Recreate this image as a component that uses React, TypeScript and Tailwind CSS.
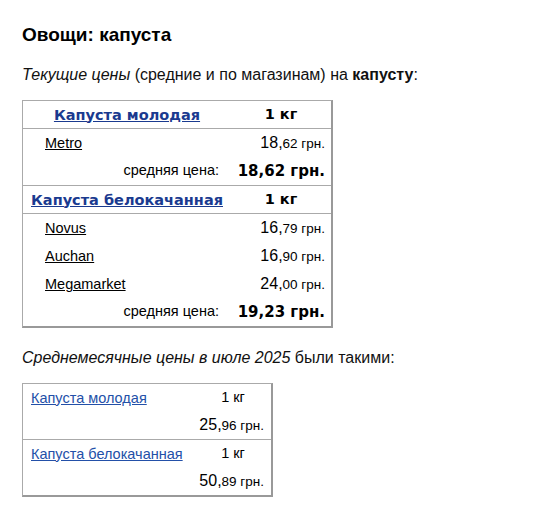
import React from "react";

const arial = { fontFamily: '"Liberation Sans", Arial, sans-serif' };

function Price({ a, b, bold }: { a: string; b: string; bold?: boolean }) {
  if (bold) {
    return (
      <span className="font-bold text-[15px] text-black" style={{ fontFamily: '"DejaVu Sans", Verdana, sans-serif' }}>
        {a},{b} грн.
      </span>
    );
  }
  return (
    <span className="text-black">
      <span className="text-[16px]">{a},</span>
      <span className="text-[13.5px]">{b} грн.</span>
    </span>
  );
}

function ShopRow({ name, a, b }: { name: string; a: string; b: string }) {
  return (
    <div className="grid grid-cols-[208px_1fr] h-[28px] items-center">
      <div className="pl-[22px]">
        <span className="underline text-[14.5px] text-black">{name}</span>
      </div>
      <div className="text-right pr-[6px]">
        <Price a={a} b={b} />
      </div>
    </div>
  );
}

function AvgRow({ a, b }: { a: string; b: string }) {
  return (
    <div className="grid grid-cols-[208px_1fr] h-[28px] items-center">
      <div className="text-right pr-[12px] text-[14.5px] text-black">средняя цена:</div>
      <div className="text-right pr-[6px]">
        <Price a={a} b={b} bold />
      </div>
    </div>
  );
}

function Header({ name, center }: { name: string; center?: boolean }) {
  return (
    <div className="grid grid-cols-[208px_1fr] h-[28px] items-center border-b border-[#aaa]" style={{ fontFamily: '"DejaVu Sans", Verdana, sans-serif' }}>
      <div className={center ? "text-center" : "pl-[8px]"}>
        <span className="underline font-bold text-[14.5px] text-[#1a3a8f]">{name}</span>
      </div>
      <div className="text-center font-bold text-[14.5px] text-black">1 кг</div>
    </div>
  );
}

function MonthBlock({ name, a, b, last }: { name: string; a: string; b: string; last?: boolean }) {
  return (
    <div className={last ? "" : "border-b border-[#aaa]"}>
      <div className="grid grid-cols-[172px_1fr] h-[27px] items-center">
        <div className="pl-[8px]">
          <span className="underline text-[14.5px] text-[#2350a8]">{name}</span>
        </div>
        <div className="text-center text-[14.5px] text-black">1 кг</div>
      </div>
      <div className="h-[28px] flex items-center justify-end pr-[7px]">
        <Price a={a} b={b} />
      </div>
    </div>
  );
}

export default function App() {
  return (
    <div className="bg-white w-[533px] h-[513px] pl-[22px] pt-[24px] text-black" style={arial}>
      <h1 className="text-[19px] font-bold leading-[22px]">Овощи: капуста</h1>
      <p className="mt-[20px] text-[16px] leading-[18px] text-[#111]">
        <i>Текущие цены</i> (средние и по магазинам) на <b>капусту</b>:
      </p>
      <div className="mt-[16px] w-[311px] border border-[#aaa] border-b-2 border-r-2 border-b-[#999] border-r-[#999]">
        <Header name="Капуста молодая" center />
        <ShopRow name="Metro" a="18" b="62" />
        <AvgRow a="18" b="62" />
        <div className="border-t border-[#aaa]">
          <Header name="Капуста белокачанная" />
        </div>
        <ShopRow name="Novus" a="16" b="79" />
        <ShopRow name="Auchan" a="16" b="90" />
        <ShopRow name="Megamarket" a="24" b="00" />
        <AvgRow a="19" b="23" />
      </div>
      <p className="mt-[21px] text-[16px] leading-[18px] text-[#111]">
        <i>Среднемесячные цены в июле 2025</i> были такими:
      </p>
      <div className="mt-[16px] w-[251px] border border-[#aaa] border-b-2 border-r-2 border-b-[#999] border-r-[#999]">
        <MonthBlock name="Капуста молодая" a="25" b="96" />
        <MonthBlock name="Капуста белокачанная" a="50" b="89" last />
      </div>
    </div>
  );
}
